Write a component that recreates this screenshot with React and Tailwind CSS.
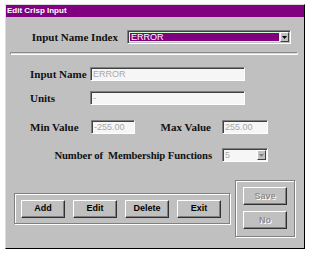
import React from "react";

const serif = { fontFamily: '"Liberation Serif", "Times New Roman", serif' };

function Field({ w, value, className = "" }) {
  return (
    <div
      className={`h-[14px] bg-[#f6f6f6] border-t border-l border-[#808080] border-b border-r border-b-white border-r-white shadow-[inset_1px_1px_0_#404040] flex items-center pl-[2px] text-[9px] text-[#a8a8a8] leading-none ${className}`}
      style={{ width: w, fontFamily: '"Liberation Sans", Arial, sans-serif' }}
    >
      {value}
    </div>
  );
}

function Arrow({ color = "#000" }) {
  return (
    <svg width="5" height="3" viewBox="0 0 5 3">
      <path d="M0 0H5L2.5 3Z" fill={color} />
    </svg>
  );
}

function DropBtn({ disabled }) {
  return (
    <div className="h-full w-[9px] bg-[#c0c0c0] border-t border-l border-white border-b border-r border-b-[#404040] border-r-[#404040] flex items-center justify-center">
      <Arrow color={disabled ? "#808080" : "#000"} />
    </div>
  );
}

function Btn({ children, disabled, className = "" }) {
  return (
    <div
      className={`w-[44px] h-[18px] bg-[#c0c0c0] border-t border-l border-white border-b border-r border-b-[#303030] border-r-[#303030] shadow-[inset_-1px_-1px_0_#808080] flex items-center justify-center text-[9px] font-bold leading-none ${
        disabled ? "text-[#8c8c8c] [text-shadow:1px_1px_0_#ffffff]" : "text-black"
      } ${className}`}
      style={{ fontFamily: '"Liberation Sans", Arial, sans-serif' }}
    >
      {children}
    </div>
  );
}

export default function App() {
  return (
    <div className="w-[311px] h-[255px] bg-white overflow-hidden pt-[4px] pl-[5px]">
      <div className="w-[300px] h-[245px] bg-[#c0c0c0] border-l border-t border-[#dcdcdc] border-r border-b border-r-[#000] border-b-[#000] flex flex-col">
        {/* title bar */}
        <div
          className="h-[12px] bg-[#800080] text-white text-[8px] font-bold leading-none flex items-center pl-[1px]"
          style={{ fontFamily: '"Liberation Sans", Arial, sans-serif' }}
        >
          Edit Crisp Input
        </div>

        {/* row 1 */}
        <div className="flex items-center mt-[13px]">
          <div className="w-[112px] text-right text-[11px] font-bold leading-none text-[#111]" style={serif}>
            Input Name Index
          </div>
          <div className="ml-[9px] w-[164px] h-[14px] border-t border-l border-[#808080] border-b border-r border-b-white border-r-white shadow-[inset_1px_1px_0_#404040] flex p-[1px]">
            <div
              className="flex-1 bg-[#800080] border border-[#d0ffd0] text-[9px] text-white leading-none flex items-center pl-[1px]"
              style={{ fontFamily: '"Liberation Sans", Arial, sans-serif' }}
            >
              ERROR
            </div>
            <DropBtn />
          </div>
        </div>

        {/* separator */}
        <div className="ml-[4px] mt-[8px] w-[288px] h-[3px] rounded-full border border-[#8a8a8a] border-b-white border-r-white bg-[#d8d8d8]" />

        {/* Input Name */}
        <div className="flex items-center mt-[12px] pl-[24px]">
          <div className="w-[60px] text-[11px] font-bold leading-none text-[#111]" style={serif}>
            Input Name
          </div>
          <Field w={155} value="ERROR" />
        </div>

        {/* Units */}
        <div className="flex items-center mt-[10px] pl-[24px]">
          <div className="w-[60px] text-[11px] font-bold leading-none text-[#111]" style={serif}>
            Units
          </div>
          <Field w={155} value="-" />
        </div>

        {/* Min / Max */}
        <div className="flex items-center mt-[15px] pl-[24px]">
          <div className="w-[61px] text-[11px] font-bold leading-none text-[#111]" style={serif}>
            Min Value
          </div>
          <Field w={44} value="-255.00" />
          <div className="w-[87px] text-right pr-[11px] text-[11px] font-bold leading-none text-[#111]" style={serif}>
            Max Value
          </div>
          <Field w={46} value="255.00" />
        </div>

        {/* Number of membership functions */}
        <div className="flex items-center mt-[14px]">
          <div className="w-[216px] text-right pr-[10px] text-[10.7px] tracking-[-0.1px] font-bold leading-none text-[#111] whitespace-pre" style={serif}>
            {"Number of  Membership Functions"}
          </div>
          <div className="w-[46px] h-[14px] bg-[#f6f6f6] border-t border-l border-[#808080] border-b border-r border-b-white border-r-white shadow-[inset_1px_1px_0_#404040] flex p-[1px]">
            <div
              className="flex-1 text-[9px] text-[#a8a8a8] leading-none flex items-center pl-[1px]"
              style={{ fontFamily: '"Liberation Sans", Arial, sans-serif' }}
            >
              5
            </div>
            <DropBtn disabled />
          </div>
        </div>

        {/* bottom buttons */}
        <div className="flex items-start mt-[18px]">
          <div className="ml-[8px] mt-[13px] w-[216px] h-[31px] border border-[#808080] shadow-[1px_1px_0_#ffffff,inset_1px_1px_0_#ffffff] flex items-center gap-[8px] pl-[6px]">
            <Btn>Add</Btn>
            <Btn>Edit</Btn>
            <Btn>Delete</Btn>
            <Btn>Exit</Btn>
          </div>
          <div className="ml-[5px] w-[60px] h-[57px] border border-[#808080] shadow-[1px_1px_0_#ffffff,inset_1px_1px_0_#ffffff] flex flex-col items-center pt-[6px] gap-[6px]">
            <Btn disabled>Save</Btn>
            <Btn disabled>No</Btn>
          </div>
        </div>
      </div>
    </div>
  );
}
